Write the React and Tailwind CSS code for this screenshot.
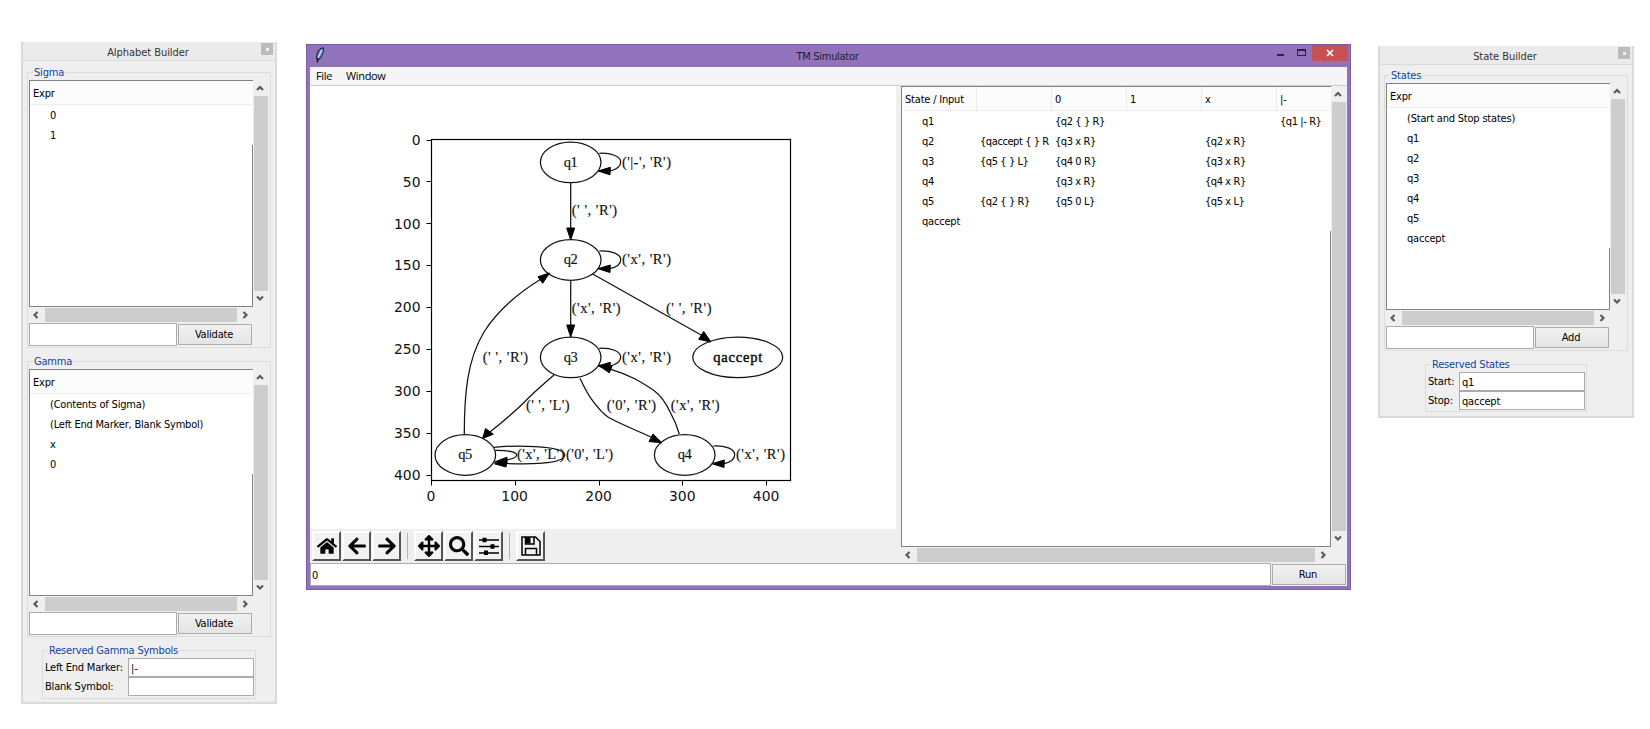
import React from "react";
import { FaHome, FaArrowLeft, FaArrowRight, FaArrowsAlt, FaSearch } from "react-icons/fa";

const CHEVRONS = {
  up: "M1 6 L4 3 L7 6",
  down: "M1 2.5 L4 5.5 L7 2.5",
  left: "M5.5 1 L2.5 4 L5.5 7",
  right: "M2.5 1 L5.5 4 L2.5 7",
};

function Chevron({ dir }) {
  return (
    <svg width="8" height="8" viewBox="0 0 8 8" className="shrink-0">
      <path d={CHEVRONS[dir]} fill="none" stroke="#5c5c5c" strokeWidth="2.2" />
    </svg>
  );
}

function VScroll() {
  return (
    <div className="flex w-[14px] flex-col bg-[#efefef]">
      <div className="flex h-4 items-center justify-center pr-[2px]"><Chevron dir="up" /></div>
      <div className="flex-1 bg-[#cdcdcd]" />
      <div className="flex h-4 items-center justify-center pb-[2px] pr-[2px]"><Chevron dir="down" /></div>
    </div>
  );
}

function HScroll() {
  return (
    <div className="flex h-[14px] bg-[#efefef]">
      <div className="flex w-4 items-center justify-center pb-px pr-[2px]"><Chevron dir="left" /></div>
      <div className="flex-1 bg-[#cdcdcd]" />
      <div className="flex w-4 items-center justify-center pb-px"><Chevron dir="right" /></div>
    </div>
  );
}

function Button({ children }) {
  return (
    <button className="h-[21px] w-[74px] border border-[#acacac] bg-linear-to-b from-[#f1f1f1] to-[#e4e4e4] pr-[2px] text-center leading-[20px]">
      {children}
    </button>
  );
}

function Group({ label, className, children }) {
  return (
    <div className={`relative border border-[#dcdcdc] ${className}`}>
      <span className="absolute -top-[7px] left-[5px] bg-[#efefef] px-px leading-[14px] text-[#1541a5]">{label}</span>
      {children}
    </div>
  );
}

function ListBox({ items, button }) {
  return (
    <div className="pl-px pt-[7px]">
      <div className="flex h-[227px] gap-px">
        <div className="flex w-[224px] flex-col border-y border-l border-[#828282] bg-white">
          <div className="h-6 shrink-0 border-b border-[#ececf2] bg-[#fcfcfd] pl-[3px] leading-[25px]">Expr</div>
          {items.map((item) => (
            <div key={item} className="h-5 shrink-0 whitespace-pre pl-[20px] leading-[21px]">{item}</div>
          ))}
          <div className="flex-1 border-r border-[#828282]" />
        </div>
        <VScroll />
      </div>
      <div className="mt-px w-[224px]"><HScroll /></div>
      <div className="mt-px flex items-center gap-px">
        <div className="h-[23px] w-[148px] border border-[#ababab] bg-white" />
        <Button>{button}</Button>
      </div>
    </div>
  );
}

function Field({ label, value, labelClass }) {
  return (
    <div className="flex h-[19px]">
      <span className={`whitespace-nowrap pt-px leading-[17px] ${labelClass}`}>{label}</span>
      <div className="h-[19px] w-[126px] border border-[#ababab] bg-white pl-[2px] leading-[19px]">{value}</div>
    </div>
  );
}

function ToolWindow({ title, className, children }) {
  return (
    <div className={`flex w-64 flex-col border-2 border-t-0 border-[#dadada] bg-[#ebebeb] ${className}`}>
      <div className="relative h-[18px] shrink-0 pr-[2px] text-center leading-[22px] tracking-[-0.05px] text-[#333]">
        {title}
        <div className="absolute right-[2px] top-px flex h-3 w-3 items-center justify-center bg-[#bbbbbb]">
          <div className="h-[3px] w-[3px] bg-[#f0f0f0]" />
        </div>
      </div>
      <div className="flex-1 border-t border-[#dadada] bg-[#efefef] pl-1">{children}</div>
    </div>
  );
}

const NODES = [
  ["q1", 570.7, 162.3, 30.3, 14],
  ["q2", 570.7, 260, 30.3, 14],
  ["q3", 570.7, 357.3, 30.3, 14],
  ["q5", 465.3, 455, 30.3, 14],
  ["q4", 684.7, 455, 30.3, 14],
  ["qaccept", 737.7, 357.3, 45, 49],
];

const LABELS = [
  ["('|-', 'R')", 622, 166.5, 49],
  ["(' ', 'R')", 571.7, 215, 45.5],
  ["('x', 'R')", 622, 264, 49],
  ["('x', 'R')", 571.7, 313, 49],
  ["(' ', 'R')", 666, 313, 45.5],
  ["(' ', 'R')", 482.7, 361.5, 45.5],
  ["('x', 'R')", 622, 361.5, 49],
  ["(' ', 'L')", 526, 410, 43.5],
  ["('0', 'R')", 606.7, 410, 49.5],
  ["('x', 'R')", 670.7, 410, 49],
  ["('x', 'L')", 517, 459, 47.5],
  ["('0', 'L')", 566, 459, 47],
  ["('x', 'R')", 736, 459, 49],
];

const EDGES = [
  "M570.7 183V229",
  "M570.7 280.5V326",
  "M592.7 274L702 335.5",
  "M464.3 434C464.3 395 467 360 484 332C497 311 520 292 541 279",
  "M554 375C540 387 530 396 523 403.5C511 415 500 424 489.3 432.5",
  "M580 378.3C584 387 588 395 593.3 401.7C598 408 602 413 608.3 417.3C620 424 636 430 652 437.5",
  "M679.3 434C677 426 674 419 670 411.7C666 403 660 395 653.3 390C641 382 630 375 611 369.3",
  "M495.3 450.3C507 450 516.7 452 516.7 455C516.7 457.5 512 459 506 460",
  "M493.8 447.4C510 445.5 564.3 444.5 564.7 455C564.3 464.5 525 464.5 506 463.5",
];

const HEADS = [
  "570.7,240 566.7,228 574.7,228",
  "570.7,337 566.7,325 574.7,325",
  "711,342 698.7,339.3 703.7,331.5",
  "549.5,273 538,276.7 542.7,283.3",
  "482.7,438.5 485.5,428.5 493.3,434.2",
  "662,442.8 653,434 649,441.5",
  "598.3,365.3 612.3,365.5 609.3,372.8",
  "494.5,462 507,457.2 507,463.4",
  "494.5,463.8 507,461 506,467",
];

const LOOPS = [[0, 0], [0, 97.7], [0, 195], [114, 292.7]];

const Y_TICKS = [[0, 140], [50, 181.7], [100, 223.5], [150, 265.4], [200, 307.3], [250, 349.2], [300, 391.1], [350, 433.1], [400, 475.1]];
const X_TICKS = [[0, 431.3], [100, 515], [200, 599], [300, 682.7], [400, 766.5]];

function Plot() {
  return (
    <svg width="586" height="443" viewBox="310 86 586 443" className="block shrink-0 bg-white tracking-normal">
      <rect x="431.5" y="139.5" width="359" height="341" fill="none" stroke="#000" strokeWidth="1.2" />
      <g fontFamily='"DejaVu Sans", sans-serif' fontSize="13.9" fill="#111">
        {Y_TICKS.map(([v, y]) => (
          <g key={v}>
            <path d={`M426.5 ${Math.floor(y) + 0.5}H431.5`} stroke="#000" />
            <text x="420.5" y={y + 5} textAnchor="end">{v}</text>
          </g>
        ))}
        {X_TICKS.map(([v, x]) => (
          <g key={v}>
            <path d={`M${Math.floor(x) + 0.5} 480.5V485.5`} stroke="#000" />
            <text x={x - 0.4} y="501" textAnchor="middle">{v}</text>
          </g>
        ))}
      </g>
      <g fill="none" stroke="#111" strokeWidth="1.25">
        {NODES.map(([n, x, y, rx]) => <ellipse key={n} cx={x} cy={y} rx={rx} ry="20.3" />)}
        {EDGES.map((d) => <path key={d} d={d} />)}
      </g>
      {HEADS.map((p) => <polygon key={p} points={p} stroke="#000" strokeWidth="1" />)}
      {LOOPS.map(([x, y]) => (
        <g key={y} transform={`translate(${x} ${y})`}>
          <path d="M599.3 153.3C611 152.8 620.7 156 620.7 162C620.7 167 616 169.5 610 171" fill="none" stroke="#111" strokeWidth="1.25" />
          <polygon points="598,171 610.3,167.3 610,174.8" stroke="#000" strokeWidth="1" />
        </g>
      ))}
      <g fontFamily='"Liberation Serif", serif' fontSize="14.5" fill="#111">
        {NODES.map(([n, x, y, , w]) => (
          <text key={n} x={x} y={y + 4.3} textAnchor="middle" textLength={w} stroke="#111" strokeWidth={n === "qaccept" ? 0.5 : 0.15}>{n}</text>
        ))}
        {LABELS.map(([t, x, y, w]) => (
          <text key={`${x}-${y}`} x={x} y={y} textLength={w} stroke="#111" strokeWidth="0.15">{t}</text>
        ))}
      </g>
    </svg>
  );
}

function SlidersIcon() {
  return (
    <svg width="20" height="18" viewBox="0 0 20 18">
      <path d="M0 3H20M0 9.5H20M0 16H20" stroke="#000" strokeWidth="1.3" />
      <path d="M3.5 0.8h4v4.4h-4zM11.5 7.3h4v4.4h-4zM5 13.6h4V18H5z" />
    </svg>
  );
}

function SaveIcon() {
  return (
    <svg width="20" height="20" viewBox="0 0 20 20" fill="none" stroke="#000" strokeWidth="1.5">
      <path d="M1 1H14.5L19 5.5V19H1Z" />
      <path d="M4.5 1V8H13V1" />
      <path d="M5 1.5H9.5V7.5H5Z" fill="#000" stroke="none" />
      <path d="M4.5 19V12.5H15.5V19" />
    </svg>
  );
}

function Tool({ children }) {
  return (
    <div className="flex h-[30px] w-[29px] items-center justify-center border-2 border-b-[#555] border-l-white border-r-[#555] border-t-white bg-[#f2f2f2] pt-px text-black">
      {children}
    </div>
  );
}

function Separator() {
  return <div className="mx-[6px] h-[26px] w-px bg-[#b5b5b5]" />;
}

const ROWS = [
  ["q1", "", "{q2 { } R}", "", "", "{q1 |- R}"],
  ["q2", "{qaccept { } R", "{q3 x R}", "", "{q2 x R}", ""],
  ["q3", "{q5 { } L}", "{q4 0 R}", "", "{q3 x R}", ""],
  ["q4", "", "{q3 x R}", "", "{q4 x R}", ""],
  ["q5", "{q2 { } R}", "{q5 0 L}", "", "{q5 x L}", ""],
  ["qaccept", "", "", "", "", ""],
];

function TransitionTable() {
  return (
    <div className="flex w-[430px] flex-col border-y border-l border-[#828282] bg-white">
      <div className="grid h-6 shrink-0 grid-cols-[75px_75px_75px_75px_75px_54px] border-b border-[#ececf2] bg-[#fcfcfd] leading-[25px]">
        {["State / Input", "", "0", "1", "x", "|-"].map((h, i) => (
          <div key={i} className="whitespace-nowrap border-r border-[#ececf2] pl-[3px] last:border-r-0">{h}</div>
        ))}
      </div>
      {ROWS.map((row) => (
        <div key={row[0]} className="grid h-5 shrink-0 grid-cols-[75px_75px_75px_75px_75px_54px] leading-[21px]">
          {row.map((cell, i) => (
            <div key={i} className={i === 0 ? "pl-[20px]" : "whitespace-nowrap pl-[3px] tracking-[-0.42px]"}>{cell}</div>
          ))}
        </div>
      ))}
      <div className="flex-1 border-r border-[#828282]" />
    </div>
  );
}

function MainWindow() {
  return (
    <div className="mt-[44px] flex h-[546px] w-[1045px] flex-col border border-[#7b5ea5] bg-[#9173bb] px-[3px] pb-[3px]">
      <div className="relative flex h-[22px] shrink-0 items-center justify-center pr-[2px] pt-[2px] tracking-[-0.3px] text-[#222]">
        <svg width="10" height="16" viewBox="0 0 10 16" className="absolute left-[5px] top-[2px]">
          <path d="M8.3 0.9C4.5 1.2 1.2 5.5 1.6 11.5L3 13C6.8 10.5 9 5.5 8.3 0.9Z" fill="#5f88b8" stroke="#17233c" strokeWidth="1.1" />
          <path d="M7 2.5L3 11" stroke="#d5e8f5" strokeWidth="1.2" />
          <path d="M2.5 11V15.5" stroke="#111" strokeWidth="1.3" />
        </svg>
        <span>TM Simulator</span>
        <div className="absolute -right-px top-0 flex">
          <div className="mr-[13px] mt-[9px] h-[2px] w-[7px] bg-[#31213f]" />
          <div className="mr-[6px] mt-[4px] h-[7px] w-[9px] border border-t-2 border-[#31213f]" />
          <div className="flex h-4 w-9 items-center justify-center bg-[#c75050]">
            <svg width="8" height="8" viewBox="0 0 8 8"><path d="M1 1L7 7M7 1L1 7" stroke="#fff" strokeWidth="1.7" /></svg>
          </div>
        </div>
      </div>
      <div className="flex h-[19px] shrink-0 gap-[14px] border-b border-[#cfcfcf] bg-[#f5f5f7] pl-[6px] font-['Open_Sans',sans-serif] text-[11px] leading-[18px] tracking-[-0.35px]">
        <span>File</span>
        <span>Window</span>
      </div>
      <div className="flex h-[477px] shrink-0 bg-[#efefef]">
        <div className="flex w-[586px] flex-col">
          <Plot />
          <div className="flex h-[34px] items-center pb-px pl-[2px]">
            <div className="flex gap-px"><Tool><FaHome size={20} /></Tool><Tool><FaArrowLeft size={20} /></Tool><Tool><FaArrowRight size={20} /></Tool></div>
            <Separator />
            <div className="flex gap-px"><Tool><FaArrowsAlt size={22} /></Tool><Tool><FaSearch size={20} /></Tool><Tool><SlidersIcon /></Tool></div>
            <Separator />
            <Tool><SaveIcon /></Tool>
          </div>
        </div>
        <div className="ml-[5px]">
          <div className="flex h-[461px] gap-px"><TransitionTable /><VScroll /></div>
          <div className="mt-px w-[430px]"><HScroll /></div>
        </div>
      </div>
      <div className="flex h-[23px] shrink-0 items-center gap-px bg-[#efefef]">
        <div className="h-[23px] w-[961px] border border-[#ababab] bg-white pl-px leading-[23px]">0</div>
        <Button>Run</Button>
      </div>
    </div>
  );
}

export default function App() {
  return (
    <div className="flex h-[729px] w-[1650px] items-start overflow-hidden bg-white font-['DejaVu_Sans_Condensed','DejaVu_Sans',sans-serif] text-[11px] tracking-[-0.2px] text-black">
      <ToolWindow title="Alphabet Builder" className="ml-[21px] mt-[42px] h-[662px]">
        <Group label="Sigma" className="mt-[11px] h-[276px] w-[244px]">
          <ListBox items={["0", "1"]} button="Validate" />
        </Group>
        <Group label="Gamma" className="mt-[13px] h-[276px] w-[244px]">
          <ListBox items={["(Contents of Sigma)", "(Left End Marker, Blank Symbol)", "x", "0"]} button="Validate" />
        </Group>
        <Group label="Reserved Gamma Symbols" className="ml-[15px] mt-[13px] h-[49px] w-[214px] pl-[2px] pt-[7px]">
          <Field label="Left End Marker:" value="|-" labelClass="w-[83px]" />
          <Field label="Blank Symbol:" value="" labelClass="w-[83px]" />
        </Group>
      </ToolWindow>
      <div className="ml-[29px]"><MainWindow /></div>
      <ToolWindow title="State Builder" className="ml-[27px] mt-[46px] h-[372px]">
        <Group label="States" className="mt-[10px] h-[276px] w-[244px]">
          <ListBox items={["(Start and Stop states)", "q1", "q2", "q3", "q4", "q5", "qaccept"]} button="Add" />
        </Group>
        <Group label="Reserved States" className="ml-[41px] mt-[13px] h-[48px] w-[162px] pl-[2px] pt-[7px]">
          <Field label="Start:" value="q1" labelClass="w-[31px]" />
          <Field label="Stop:" value="qaccept" labelClass="w-[31px]" />
        </Group>
      </ToolWindow>
    </div>
  );
}
